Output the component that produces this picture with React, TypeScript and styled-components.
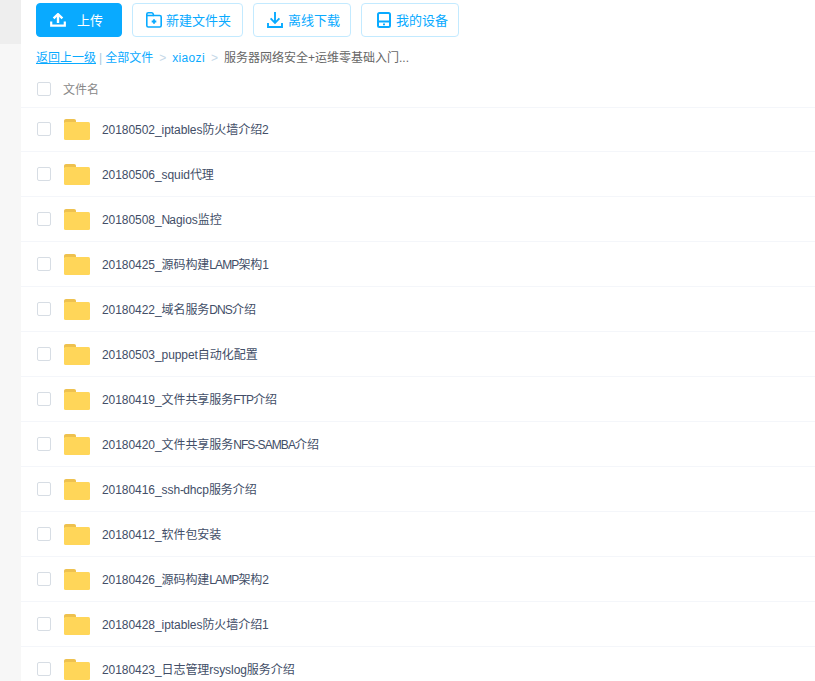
import React from "react";
import styled, { createGlobalStyle } from "styled-components";

const Global = createGlobalStyle`
  html, body { margin: 0; padding: 0; background: #fff; overflow: hidden; height: 681px; }
  * { box-sizing: border-box; }
  body { font-family: "Liberation Sans", "Noto Sans CJK SC", sans-serif; }
`;

const Page = styled.div`
  display: flex;
  width: 815px;
  height: 681px;
  overflow: hidden;
`;

const Sidebar = styled.div`
  width: 21px;
  flex: none;
  background: #f7f7f7;
  display: flex;
  flex-direction: column;
`;

const SidebarActive = styled.div`
  height: 44px;
  background: #eeeeee;
`;

const Main = styled.div`
  flex: 1;
  min-width: 0;
  display: flex;
  flex-direction: column;
`;

const Toolbar = styled.div`
  display: flex;
  gap: 10px;
  padding: 3px 0 0 15px;
  height: 37px;
  flex: none;
`;

const ToolButton = styled.div<{ $primary?: boolean; $width: number; $pad?: number; $gap?: number }>`
  width: ${(p) => p.$width}px;
  height: 34px;
  display: flex;
  align-items: center;
  padding-left: ${(p) => p.$pad ?? 13}px;
  gap: ${(p) => p.$gap ?? 5}px;
  border-radius: 4px;
  font-size: 13px;
  color: ${(p) => (p.$primary ? "#fff" : "#09aaff")};
  background: ${(p) => (p.$primary ? "#09aaff" : "#fff")};
  border: 1px solid ${(p) => (p.$primary ? "#09aaff" : "#c3eaff")};
`;

const ButtonLabel = styled.span`
  padding-bottom: 2px;
`;

const Crumbs = styled.div`
  display: flex;
  align-items: baseline;
  flex: none;
  height: 34px;
  padding: 12px 0 0 15px;
  font-size: 12px;
  line-height: 18px;
  color: #09aaff;
  white-space: pre;
`;

const BackLink = styled.span`
  text-decoration: underline;
`;

const Sep = styled.span`
  color: #c5d8e8;
  margin: 0 6px;
`;

const Bar = styled.span`
  color: #a8c8de;
  margin: 0 3px;
`;

const FolderCrumb = styled.span`
  letter-spacing: 0.35px;
`;

const Current = styled.span`
  color: #666;
`;

const Header = styled.div`
  display: flex;
  align-items: center;
  flex: none;
  height: 37px;
  margin-bottom: -1px;
  padding-left: 16px;
  border-bottom: 1px solid #f4f6fa;
  font-size: 12px;
  color: #888;
`;

const HeaderLabel = styled.span`
  padding-bottom: 1px;
`;

const Row = styled.div`
  display: flex;
  align-items: center;
  height: 45px;
  flex: none;
  padding-left: 16px;
  border-bottom: 1px solid #f4f6fa;
`;

const Check = styled.span`
  width: 14px;
  height: 14px;
  flex: none;
  border: 1px solid #d7dde4;
  border-radius: 2px;
  background: #fff;
  margin-right: 12px;
`;

const FolderSlot = styled.span`
  display: flex;
  flex: none;
  margin-left: 1px;
`;

const Name = styled.span`
  font-size: 12px;
  color: #424e67;
  margin-left: 12px;
  padding-bottom: 2px;
  letter-spacing: -0.06px;
`;

const Caps = styled.span`
  letter-spacing: -0.9px;
`;

const Folder = () => (
  <FolderSlot>
    <svg width="26" height="21" viewBox="0 0 26 21">
      <path d="M0 4V2C0 .8.8 0 2 0h8c1.3 0 2 .9 2 2v2z" fill="#eec14e" />
      <rect x="0" y="3" width="26" height="18" rx="1.5" fill="#ffd659" />
    </svg>
  </FolderSlot>
);

const UploadIcon = () => (
  <svg width="16" height="14" viewBox="0 0 16 14" fill="none" stroke="#fff">
    <path d="M8 10V1.5" strokeWidth="2.4" />
    <path d="M3.6 5.4 8 1.2l4.4 4.2" strokeWidth="2.4" />
    <path d="M1.2 8.5v4.2h13.6V8.5" strokeWidth="2.2" />
  </svg>
);

const NewFolderIcon = () => (
  <svg width="16" height="16" viewBox="0 0 16 16" fill="none" stroke="#09aaff" strokeWidth="1.6">
    <path d="M.8 13.5V2.3C.8 1.4 1.4.8 2.3.8h3.4c.8 0 1.3.5 1.5 1.2l.4 1.5h6.1c.9 0 1.5.6 1.5 1.5v8.5c0 .9-.6 1.5-1.5 1.5H2.3c-.9 0-1.5-.6-1.5-1.5z" />
    <path d="M1 3.5h6.6" />
    <path d="M8 7.2v4.6M5.7 9.5h4.6" strokeWidth="1.8" />
  </svg>
);

const DownloadIcon = () => (
  <svg width="16" height="16" viewBox="0 0 16 16" fill="none" stroke="#09aaff" strokeWidth="1.9">
    <path d="M8 0v10.5M3.6 6.4 8 10.8l4.4-4.4" />
    <path d="M1 11v4h14v-4" />
  </svg>
);

const DeviceIcon = () => (
  <svg width="14" height="16" viewBox="0 0 14 16" fill="none" stroke="#09aaff" strokeWidth="2">
    <rect x="1" y="1" width="12" height="14" rx="1.5" />
    <path d="M1 9.5h12" />
    <path d="M6 12.4h2" strokeWidth="1.6" />
  </svg>
);

const names = [
  "20180502_iptables防火墙介绍2",
  "20180506_squid代理",
  "20180508_Nagios监控",
  "20180425_源码构建LAMP架构1",
  "20180422_域名服务DNS介绍",
  "20180503_puppet自动化配置",
  "20180419_文件共享服务FTP介绍",
  "20180420_文件共享服务NFS-SAMBA介绍",
  "20180416_ssh-dhcp服务介绍",
  "20180412_软件包安装",
  "20180426_源码构建LAMP架构2",
  "20180428_iptables防火墙介绍1",
  "20180423_日志管理rsyslog服务介绍",
];

// Capitals are set tighter than the rest of the name.
const renderName = (text: string) =>
  text.split(/([A-Z-]+)/).map((part, i) => (i % 2 ? <Caps key={i}>{part}</Caps> : part));

export default function App() {
  return (
    <Page>
      <Global />
      <Sidebar>
        <SidebarActive />
      </Sidebar>
      <Main>
        <Toolbar>
          <ToolButton $primary $width={86} $gap={11}>
            <UploadIcon />
            <ButtonLabel>上传</ButtonLabel>
          </ToolButton>
          <ToolButton $width={111} $gap={4}>
            <NewFolderIcon />
            <ButtonLabel>新建文件夹</ButtonLabel>
          </ToolButton>
          <ToolButton $width={98}>
            <DownloadIcon />
            <ButtonLabel>离线下载</ButtonLabel>
          </ToolButton>
          <ToolButton $width={98} $pad={15}>
            <DeviceIcon />
            <ButtonLabel>我的设备</ButtonLabel>
          </ToolButton>
        </Toolbar>
        <Crumbs>
          <BackLink>返回上一级</BackLink>
          <Bar>|</Bar>
          全部文件
          <Sep>&gt;</Sep>
          <FolderCrumb>xiaozi</FolderCrumb>
          <Sep>&gt;</Sep>
          <Current>服务器网络安全+运维零基础入门...</Current>
        </Crumbs>
        <Header>
          <Check />
          <HeaderLabel>文件名</HeaderLabel>
        </Header>
        {names.map((n) => (
          <Row key={n}>
            <Check />
            <Folder />
            <Name>{renderName(n)}</Name>
          </Row>
        ))}
      </Main>
    </Page>
  );
}
